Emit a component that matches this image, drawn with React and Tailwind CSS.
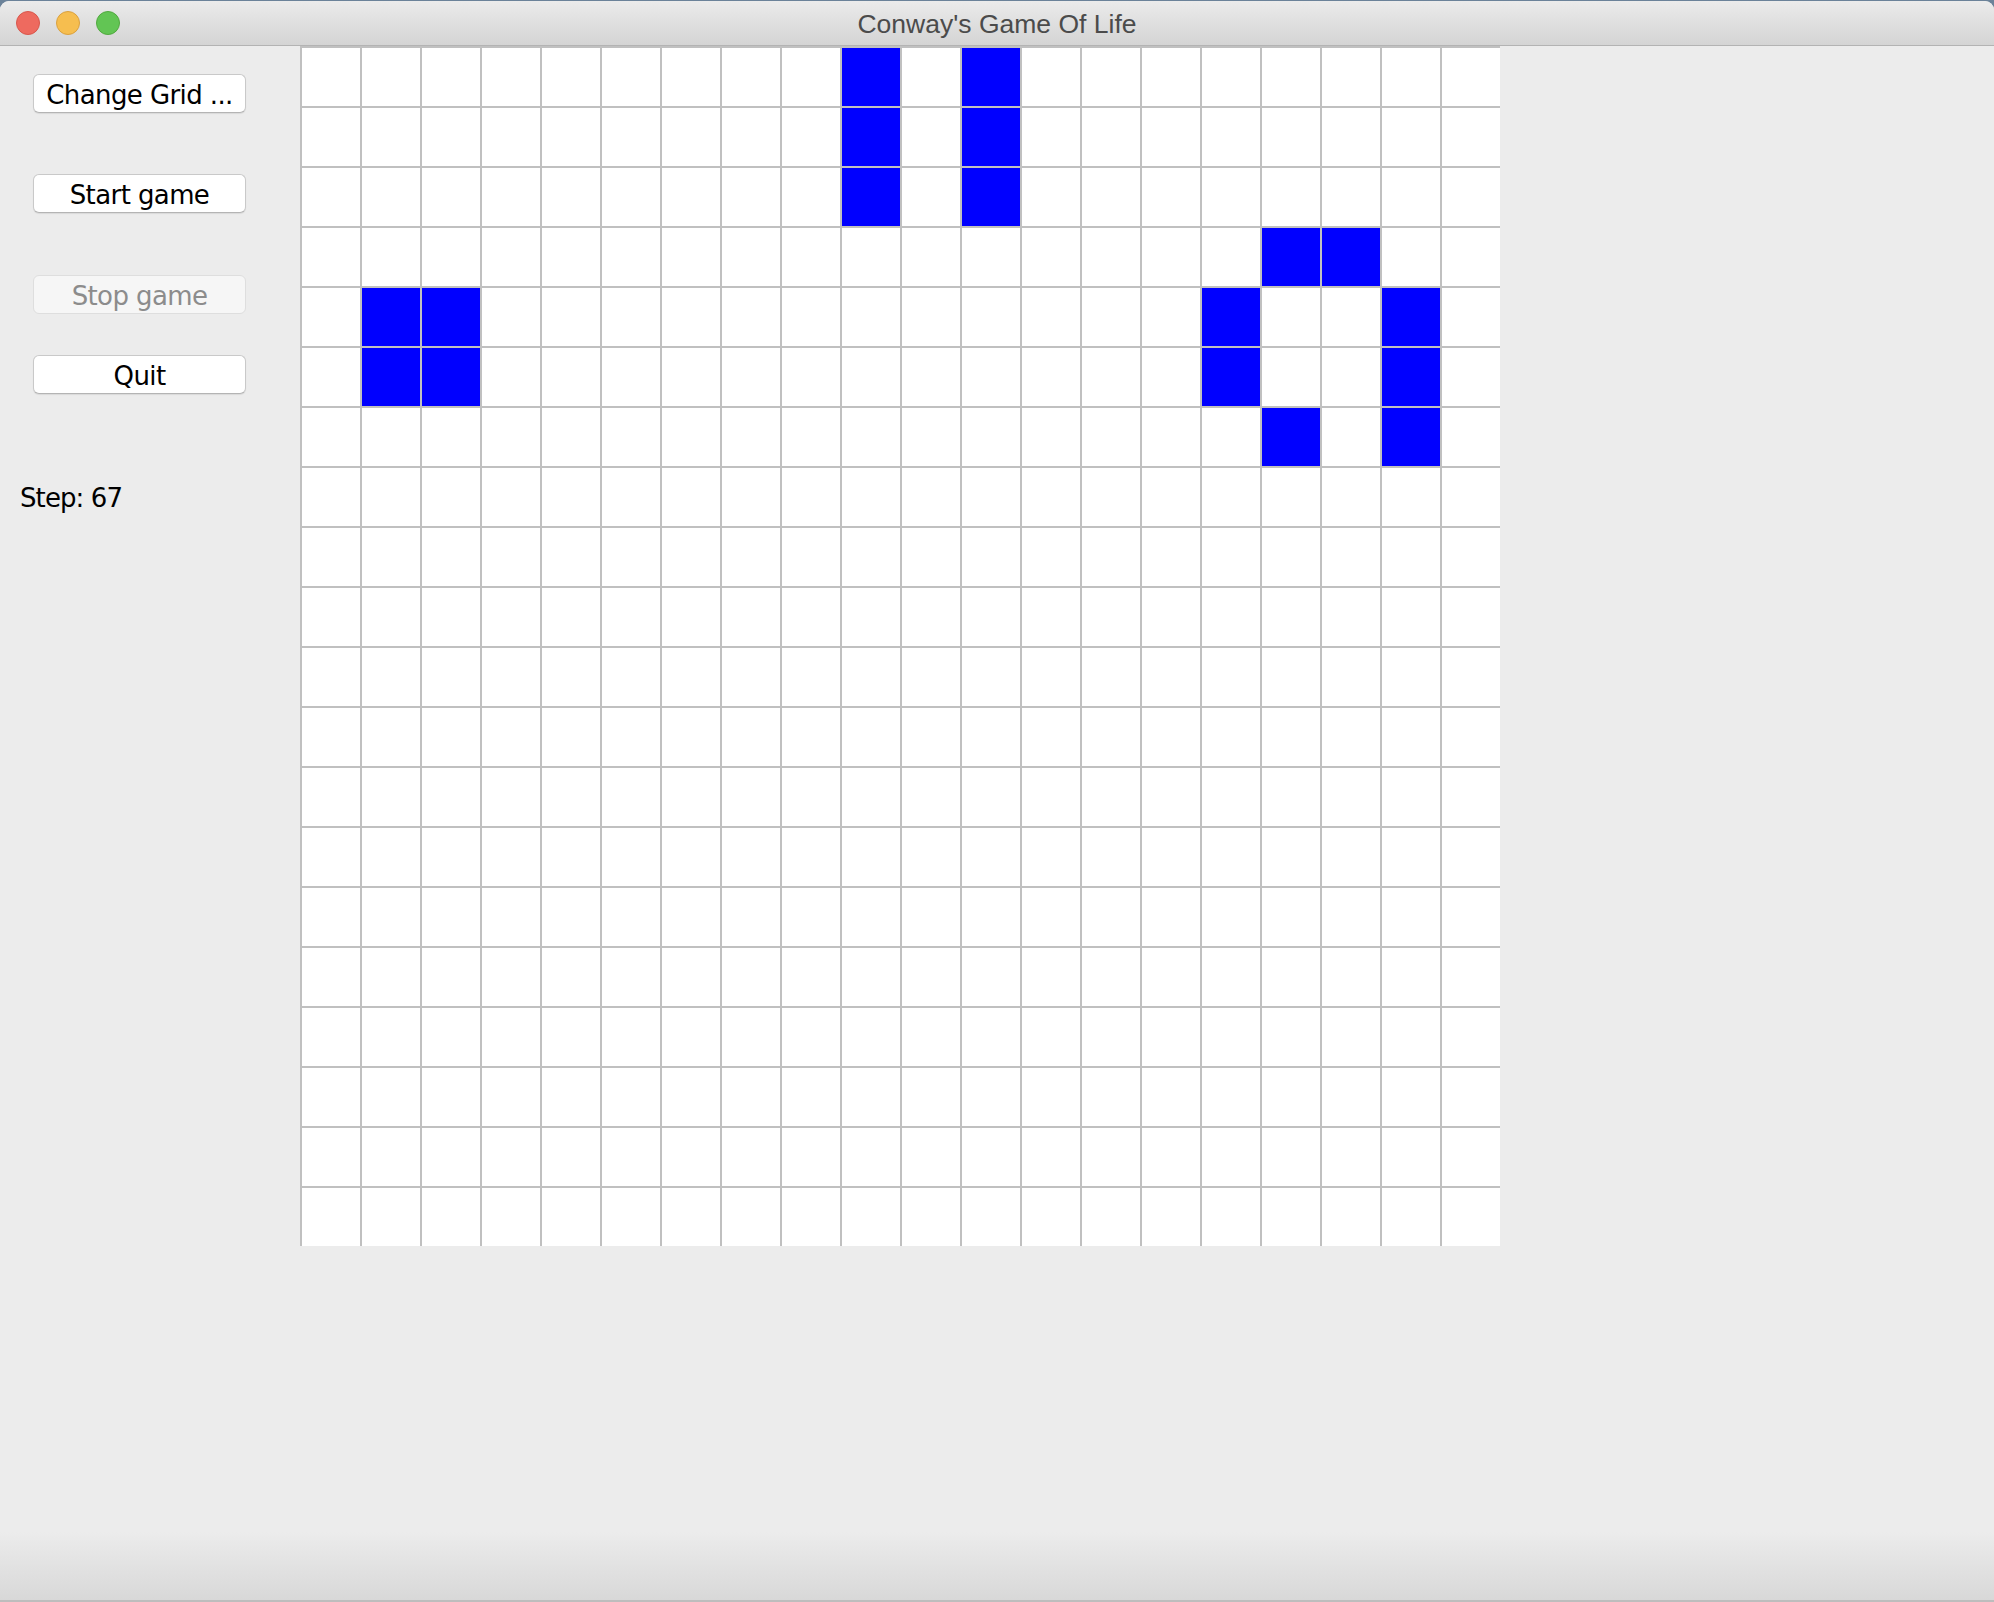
import React from "react";

const ALIVE = new Set([
  "0-9", "0-11", "1-9", "1-11", "2-9", "2-11",
  "3-16", "3-17",
  "4-1", "4-2", "4-15", "4-18",
  "5-1", "5-2", "5-15", "5-18",
  "6-16", "6-18",
]);

function Btn({ children, disabled }) {
  return (
    <div
      className={
        "w-[213px] h-[39px] rounded-[6px] border flex items-center justify-center pt-[3px] text-[26px] tracking-[-0.6px] " +
        (disabled
          ? "bg-[#f6f6f6] border-[#dedede] text-[#8c8c8c]"
          : "bg-white border-[#c9c9c9] border-b-[#b4b4b4] text-black shadow-[0_1px_1px_rgba(0,0,0,0.08)]")
      }
      style={{ fontFamily: '"DejaVu Sans", sans-serif' }}
    >
      {children}
    </div>
  );
}

export default function App() {
  const cells = [];
  for (let r = 0; r < 20; r++) {
    for (let c = 0; c < 20; c++) {
      const alive = ALIVE.has(`${r}-${c}`);
      cells.push(
        <div
          key={`${r}-${c}`}
          className={
            "w-[60px] h-[60px] border-t-2 border-l-2 border-[#c0c0c0] " +
            (alive ? "bg-[#0000ff]" : "bg-white")
          }
        />
      );
    }
  }

  return (
    <div className="w-[1994px] h-[1602px] bg-[#6b8299] pt-px overflow-hidden">
      <div className="w-full h-[1601px] flex flex-col bg-[#ececec] rounded-t-[9px] overflow-hidden">
        {/* Title bar */}
        <div className="relative h-[45px] shrink-0 bg-gradient-to-b from-[#ebebeb] to-[#d4d4d4] border-b border-[#b3b3b3] flex items-center">
          <div className="flex items-center gap-[16px] pl-[16px]">
            <div className="w-[24px] h-[24px] rounded-full bg-[#ee6a5f] border border-[#d8574c]" />
            <div className="w-[24px] h-[24px] rounded-full bg-[#f6be4f] border border-[#daa13f]" />
            <div className="w-[24px] h-[24px] rounded-full bg-[#62c554] border border-[#51a93f]" />
          </div>
          <div
            className="absolute inset-0 flex items-center justify-center pt-[4px] text-[26.5px] text-[#4b4b4b]"
            style={{ fontFamily: '"Liberation Sans", Arial, sans-serif' }}
          >
            Conway's Game Of Life
          </div>
        </div>

        {/* Body */}
        <div className="flex-1 flex flex-col">
          <div className="flex">
            <div className="w-[300px] shrink-0 flex flex-col pl-[33px] pt-[28px]">
              <Btn>Change Grid ...</Btn>
              <div className="h-[61px]" />
              <Btn>Start game</Btn>
              <div className="h-[62px]" />
              <Btn disabled>Stop game</Btn>
              <div className="h-[41px]" />
              <Btn>Quit</Btn>
              <div
                className="ml-[-13px] mt-[89px] text-[26px] leading-[30px] tracking-[-0.9px] text-black"
                style={{ fontFamily: '"DejaVu Sans", sans-serif' }}
              >
                Step: 67
              </div>
            </div>
            <div className="grid grid-cols-[repeat(20,60px)] w-[1200px]">{cells}</div>
          </div>
          <div className="flex-1" />
          <div className="h-[70px] bg-gradient-to-b from-[#ececec] to-[#d8d8d8] border-b-2 border-[#bdbdbd]" />
        </div>
      </div>
    </div>
  );
}
